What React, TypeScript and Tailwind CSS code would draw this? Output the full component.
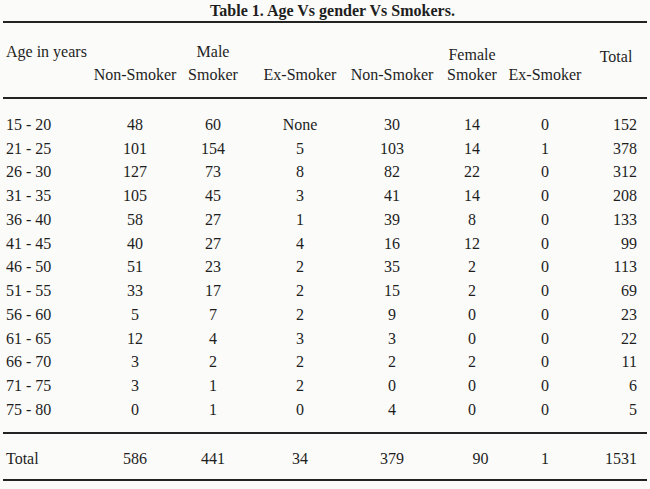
import React from "react";

const rows: string[][] = [
  ["15 - 20", "48", "60", "None", "30", "14", "0", "152"],
  ["21 - 25", "101", "154", "5", "103", "14", "1", "378"],
  ["26 - 30", "127", "73", "8", "82", "22", "0", "312"],
  ["31 - 35", "105", "45", "3", "41", "14", "0", "208"],
  ["36 - 40", "58", "27", "1", "39", "8", "0", "133"],
  ["41 - 45", "40", "27", "4", "16", "12", "0", "99"],
  ["46 - 50", "51", "23", "2", "35", "2", "0", "113"],
  ["51 - 55", "33", "17", "2", "15", "2", "0", "69"],
  ["56 - 60", "5", "7", "2", "9", "0", "0", "23"],
  ["61 - 65", "12", "4", "3", "3", "0", "0", "22"],
  ["66 - 70", "3", "2", "2", "2", "2", "0", "11"],
  ["71 - 75", "3", "1", "2", "0", "0", "0", "6"],
  ["75 - 80", "0", "1", "0", "4", "0", "0", "5"],
];

const totals = ["Total", "586", "441", "34", "379", "90", "1", "1531"];

const grid = "grid grid-cols-[96px_78px_78px_96px_88px_72px_74px_1fr]";

function Rule() {
  return <div className="mx-[3px] h-[2px] bg-[#232323]" />;
}

function DataRow({ cells, extra }: { cells: string[]; extra?: boolean }) {
  return (
    <div className={`${grid} h-[23.75px] items-center`}>
      <div className="pl-[6px] whitespace-nowrap">{cells[0]}</div>
      {cells.slice(1, 7).map((c, i) => (
        <div
          key={i}
          className={`flex justify-center whitespace-nowrap ${
            extra && i === 4 ? "pl-[17px]" : ""
          }`}
        >
          {c}
        </div>
      ))}
      <div className="flex justify-end pr-[13px] whitespace-nowrap">{cells[7]}</div>
    </div>
  );
}

export default function App() {
  return (
    <div className="w-[650px] h-[489px] overflow-hidden bg-[#fbfbf9] text-[#1e1e1e] font-['Liberation_Serif',serif] text-[16px] leading-none">
      <div className="h-[21px] flex items-center justify-center pl-[15px] font-bold">
        Table 1. Age Vs gender Vs Smokers.
      </div>
      <Rule />
      <div className="pt-[19px] pb-[12px]">
        <div className={`${grid} h-[20px] items-start`}>
          <div className="h-[20px] flex items-center pl-[6px] whitespace-nowrap">Age in years</div>
          <div />
          <div className="h-[20px] flex items-center justify-center">Male</div>
          <div />
          <div />
          <div className="h-[20px] flex items-center justify-center mt-[3px]">Female</div>
          <div />
          <div className="h-[20px] flex items-center justify-center mt-[5px]">Total</div>
        </div>
        <div className={`${grid} mt-[3px] h-[20px] items-center`}>
          <div />
          <div className="flex justify-center whitespace-nowrap">Non-Smoker</div>
          <div className="flex justify-center whitespace-nowrap">Smoker</div>
          <div className="flex justify-center whitespace-nowrap">Ex-Smoker</div>
          <div className="flex justify-center whitespace-nowrap">Non-Smoker</div>
          <div className="flex justify-center whitespace-nowrap">Smoker</div>
          <div className="flex justify-center whitespace-nowrap">Ex-Smoker</div>
          <div />
        </div>
      </div>
      <Rule />
      <div className="pt-[14px] pb-[10px]">
        {rows.map((r) => (
          <DataRow key={r[0]} cells={r} />
        ))}
      </div>
      <Rule />
      <div className="pt-[13px] pb-[8px]">
        <DataRow cells={totals} extra />
      </div>
      <Rule />
    </div>
  );
}
